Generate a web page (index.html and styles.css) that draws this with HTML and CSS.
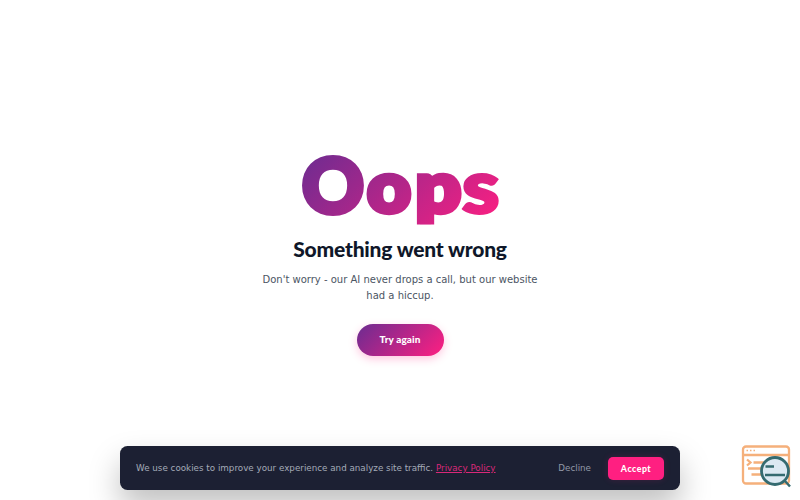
FILE: index.html
```
<!DOCTYPE html>
<html lang="en">
<head>
<meta charset="utf-8">
<title>Something went wrong</title>
<link rel="stylesheet" href="styles.css">
</head>
<body>
<main class="error">
  <svg class="oops" width="220" height="80" viewBox="0 0 220 80" role="img">
    <defs>
      <linearGradient id="brand" gradientUnits="userSpaceOnUse" x1="41" y1="-28" x2="179" y2="108">
        <stop offset="0" stop-color="#6b2c91"/>
        <stop offset="1" stop-color="#ff1f81"/>
      </linearGradient>
      <clipPath id="descender"><rect width="220" height="74.500"/></clipPath>
    </defs>
    <g fill="url(#brand)" stroke="url(#brand)" clip-path="url(#descender)">
      <text class="cap" x="12" y="63.300" textLength="62" lengthAdjust="spacingAndGlyphs">O</text>
      <text class="low" x="77.200" y="62" textLength="43.500" lengthAdjust="spacingAndGlyphs">o</text>
      <text class="low" x="125.500" y="62" textLength="45.500" lengthAdjust="spacingAndGlyphs">p</text>
      <text class="low thin" x="172" y="63" textLength="37.500" lengthAdjust="spacingAndGlyphs">s</text>
    </g>
  </svg>
  <h1>Something went wrong</h1>
  <p class="lead">Don't worry - our AI never drops a call, but our website had a hiccup.</p>
  <button class="retry">Try again</button>
</main>
<aside class="cookies">
  <p>We use cookies to improve your experience and analyze site traffic. <a href="#">Privacy Policy</a></p>
  <button class="decline">Decline</button>
  <button class="accept">Accept</button>
</aside>
<svg class="inspect" width="50" height="44" viewBox="0 0 50 44" fill="none">
  <g stroke="#f5b07b" stroke-width="2.300">
    <rect x="2" y="2.500" width="46" height="37" rx="3"/>
    <path d="M2 11H48M6 15.500l3.500 3-3.500 3M12.500 18.500H23M7 24.500H21M10.500 30.500H22"/>
    <path d="M5.500 6.500H7M9 6.500h1.500M12.500 6.500H14" stroke-width="1.700"/>
  </g>
  <circle cx="34" cy="27" r="13.500" fill="#dce9f2" stroke="#356b70" stroke-width="2.800"/>
  <path d="M24.500 22.500H33M24 31H44M43.500 36.500L49 42.500" stroke="#356b70" stroke-width="2.500"/>
</svg>
</body>
</html>
```
FILE: styles.css
```
* { box-sizing: border-box; }
body {
  margin: 0;
  height: 500px;
  overflow: hidden;
  background: #fff;
  font-family: "DejaVu Sans", sans-serif;
}
button { border: 0; padding: 0; }
.error {
  display: flex;
  flex-direction: column;
  align-items: center;
  padding-top: 150px;
}
.oops { display: block; overflow: visible; font-family: Lato, sans-serif; font-weight: 900; }
.cap { font-size: 76px; stroke-width: 5px; }
.low { font-size: 70px; stroke-width: 5.500px; }
.low.thin { font-size: 75px; stroke-width: 3px; }
h1 {
  margin: 6px 0 0;
  font: 900 21px/26px Lato, sans-serif;
  letter-spacing: -.2px;
  color: #0f1729;
  white-space: nowrap;
}
.lead {
  margin: 10px 0 0;
  width: 280px;
  font-size: 10px;
  line-height: 16px;
  text-align: center;
  color: #4b5563;
}
.retry {
  margin-top: 20px;
  width: 87px;
  height: 32px;
  padding-bottom: 2px;
  border-radius: 16px;
  background: linear-gradient(135deg, #6b2c91, #ff1f81);
  box-shadow: 0 3px 9px rgba(255, 31, 129, .25);
  color: #fff;
  font: 900 10px Lato, sans-serif;
  letter-spacing: .1px;
}
.cookies {
  position: absolute;
  left: 120px;
  bottom: 10px;
  display: flex;
  align-items: center;
  width: 560px;
  height: 44px;
  padding: 0 16px;
  border-radius: 7.500px;
  background: #1c2033;
  box-shadow: 0 16px 31px rgba(0, 0, 0, .25);
  color: #a4abb8;
  font-size: 8.750px;
}
.cookies p { margin: 0; flex: 1; white-space: nowrap; }
.cookies a { color: #d92879; text-underline-offset: 1px; }
.decline {
  margin-right: 17px;
  background: none;
  color: #9299a8;
  font: 8.750px "DejaVu Sans", sans-serif;
}
.accept {
  width: 56px;
  height: 23px;
  border-radius: 5px;
  background: #ff1f81;
  box-shadow: 0 0 7px rgba(255, 31, 129, .15);
  color: #fff;
  font: 900 8.750px Lato, sans-serif;
  letter-spacing: .5px;
}
.inspect { position: absolute; left: 741px; top: 444px; }
```
